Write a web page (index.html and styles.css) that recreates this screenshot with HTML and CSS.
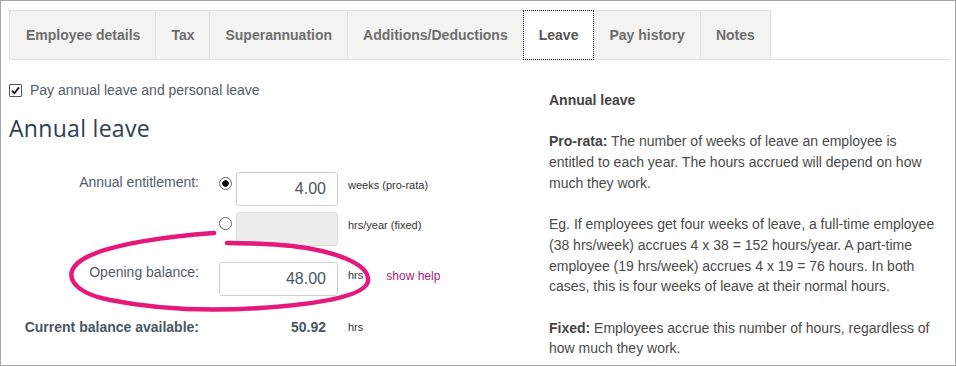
FILE: index.html
```html
<!DOCTYPE html>
<html lang="en">
  <head>
    <meta charset="UTF-8" />
    <meta name="viewport" content="width=device-width, initial-scale=1.0" />
    <title>Leave</title>
    <link rel="stylesheet" href="styles.css">
  </head>
  <body>
    <div class="frame">
      <ul class="tabs">
        <li class="tab tab-first">Employee details</li>
        <li class="tab">Tax</li>
        <li class="tab">Superannuation</li>
        <li class="tab">Additions/Deductions</li>
        <li class="tab tab-active">Leave</li>
        <li class="tab">Pay history</li>
        <li class="tab">Notes</li>
      </ul>
      <div class="content">
        <div class="form-col">
          <label class="check-row">
            <span class="check">
              <svg width="11" height="11" viewBox="0 0 11 11"><path d="M2 5.6 L4.4 8.2 L9 2.4" fill="none" stroke="#111" stroke-width="1.8"/></svg>
            </span>
            Pay annual leave and personal leave
          </label>
          <h2 class="section-title">Annual leave</h2>

          <div class="field">
            <span class="field-label">Annual entitlement:</span>
            <div class="field-control">
              <span class="radio radio-on"></span>
              <input class="num" type="text" value="4.00">
            </div>
            <span class="unit">weeks (pro-rata)</span>
          </div>
          <div class="field field-fixed">
            <span class="field-label"></span>
            <div class="field-control">
              <span class="radio"></span>
              <input class="num" type="text" value="" disabled>
            </div>
            <span class="unit">hrs/year (fixed)</span>
          </div>
          <div class="field field-opening">
            <span class="field-label">Opening balance:</span>
            <div class="field-control">
              <input class="num num-wide" type="text" value="48.00">
            </div>
            <span class="unit">hrs</span>
            <a class="help-link">show help</a>
          </div>
          <div class="field field-total">
            <span class="field-label">Current balance available:</span>
            <div class="field-control total-value">50.92</div>
            <span class="unit">hrs</span>
          </div>
        </div>

        <div class="help-col">
          <p><b>Annual leave</b></p>
          <p><b>Pro-rata:</b> The number of weeks of leave an employee is entitled to each year. The hours accrued will depend on how much they work.</p>
          <p>Eg. If employees get four weeks of leave, a full-time employee (38 hrs/week) accrues 4 x 38 = 152 hours/year. A part-time employee (19 hrs/week) accrues 4 x 19 = 76 hours. In both cases, this is four weeks of leave at their normal hours.</p>
          <p><b>Fixed:</b> Employees accrue this number of hours, regardless of how much they work.</p>
        </div>
      </div>

      <!-- hand drawn highlight round the opening balance -->
      <svg class="scribble" width="956" height="366" viewBox="0 0 956 366">
        <path d="M214,233 C170,236 110,244 85,258 C60,272 70,292 110,300 C150,308 200,312 260,308 C320,304 366,296 368,281 C370,264 335,251 292,246 C266,243 240,243 227,243"
          fill="none" stroke="#e5187c" stroke-width="4.5" stroke-linecap="round"/>
      </svg>
    </div>
  </body>
</html>
```

FILE: styles.css
```css
html,
body {
  margin: 0;
  padding: 0;
  font-family: 'Liberation Sans', Arial, sans-serif;
  background: #fff;
}
.frame {
  position: relative;
  box-sizing: border-box;
  width: 956px;
  height: 366px;
  border: 1px solid #a6a6a6;
  padding: 9px 5px 0 8px;
  overflow: hidden;
}
.tabs {
  display: flex;
  list-style: none;
  margin: 0;
  padding: 0;
  border-bottom: 1px solid #dedede;
}
.tab {
  height: 48px;
  line-height: 48px;
  padding: 0 15px;
  background: #f3f3f2;
  border: 1px solid #e0e0df;
  border-bottom: 0;
  margin-right: -1px;
  font-size: 14px;
  font-weight: bold;
  color: #6e6e6e;
}
.tab-first {
  padding-left: 16px;
}
.tab-active {
  position: relative;
  z-index: 1;
  height: 48px;
  margin-bottom: -1px;
  background: #fff;
  border: 1px dotted #111;
  color: #555;
}
.content {
  display: flex;
}
.form-col {
  width: 520px;
}
.check-row {
  display: flex;
  align-items: center;
  margin-top: 23px;
  font-size: 14px;
  line-height: 14px;
  color: #525c69;
}
.check {
  display: flex;
  align-items: center;
  justify-content: center;
  box-sizing: border-box;
  width: 13px;
  height: 13px;
  margin-right: 8px;
  border: 1px solid #555;
  border-radius: 1px;
  background: #fff;
}
.section-title {
  margin: 16px 0 0 0;
  font-family: 'Open Sans', sans-serif;
  font-size: 23px;
  font-weight: 400;
  letter-spacing: 0.3px;
  line-height: 30px;
  color: #2c3e50;
}
.field {
  display: flex;
  align-items: flex-start;
  margin-top: 6px;
}
.field:first-of-type {
  margin-top: 29px;
}
.field-label {
  width: 190px;
  padding-top: 2px;
  text-align: right;
  font-size: 14px;
  line-height: 16px;
  color: #525c69;
}
.field-control {
  display: flex;
  align-items: flex-start;
  width: 119px;
  margin-left: 20px;
}
.radio {
  box-sizing: border-box;
  width: 13px;
  height: 13px;
  margin: 5px 4px 0 0;
  border: 1px solid #666;
  border-radius: 50%;
  background: #fff;
}
.radio-on {
  background: radial-gradient(circle, #111 0 3px, #fff 3.5px);
}
.num {
  box-sizing: border-box;
  width: 102px;
  height: 34px;
  padding: 0 11px 0 6px;
  border: 1px solid #cfcfcf;
  border-radius: 3px;
  background: #fff;
  text-align: right;
  font-family: 'Liberation Sans', Arial, sans-serif;
  font-size: 16px;
  color: #4b5563;
}
.num:disabled {
  background: #ededed;
  border-color: #dcdcdc;
}
.num-wide {
  width: 119px;
}
.unit {
  margin-left: 10px;
  padding-top: 7px;
  font-size: 11px;
  color: #333;
}
.field-opening {
  margin-top: 16px;
}
.help-link {
  margin-left: 23px;
  padding-top: 7px;
  font-size: 12px;
  color: #a3237a;
  text-decoration: none;
}
.field-total {
  margin-top: 23px;
}
.field-total .field-label {
  padding-top: 0;
  font-weight: bold;
  color: #4b5563;
}
.total-value {
  justify-content: flex-end;
  box-sizing: border-box;
  padding-right: 12px;
  font-size: 14px;
  font-weight: bold;
  line-height: 16px;
  color: #4b5563;
}
.field-total .unit {
  padding-top: 2px;
}
.help-col {
  width: 392px;
  margin-left: 20px;
  padding-top: 30px;
  font-size: 14px;
  line-height: 20.7px;
  color: #4a4a4a;
}
.help-col p {
  margin: 0 0 20.7px 0;
}
.help-col b {
  color: #444;
}
.scribble {
  position: absolute;
  top: -1px;
  left: -1px;
  pointer-events: none;
}
```
